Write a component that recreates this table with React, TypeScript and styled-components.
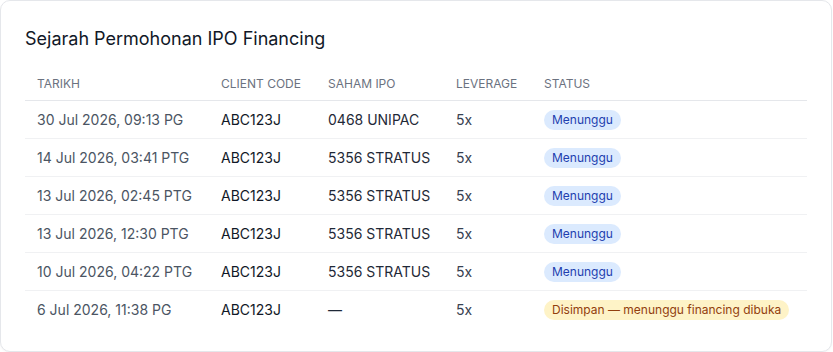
import { FC } from 'react';
import styled, { createGlobalStyle } from 'styled-components';

const Global = createGlobalStyle`
  body {
    margin: 0;
    background: #ffffff;
    font-family: Inter, "Noto Sans", sans-serif;
  }
`

const Card = styled.section`
  box-sizing: border-box;
  width: 832px;
  height: 352px;
  padding: 24px;
  background: #fff;
  border: 1px solid #e5e7eb;
  border-radius: 10px;
  box-shadow: 0 1px 2px rgba(0,0,0,0.04);
  .title{
    margin: 0 0 8px;
    font: 400 18px/28px Inter, sans-serif;
    color: #111827;
  }
`

const Table = styled.table`
  width: 100%;
  border-collapse: collapse;
  table-layout: fixed;
  th{
    text-align: left;
    font: 400 12px/16px Inter, sans-serif;
    color: #6b7280;
    text-transform: uppercase;
    padding: 15px 12px 8px;
    border-bottom: 1px solid #e5e7eb;
  }
  th:nth-child(1){ width: 160px; }
  th:nth-child(2){ width: 83px; }
  th:nth-child(3){ width: 104px; }
  th:nth-child(4){ width: 64px; }
  td{
    height: 38px;
    box-sizing: border-box;
    padding: 0 12px;
    font: 400 14px/20px Inter, sans-serif;
    color: #1f2937;
    border-bottom: 1px solid #f0f1f3;
    white-space: nowrap;
  }
  tr:last-child td{
    border-bottom: none;
  }
  td.date{ color: #4b5563; }
  td.code{ color: #111827; }
  td.lev{ color: #374151; }
`

const Badge = styled.span<{ $tone: 'blue' | 'amber' }>`
  display: inline-block;
  padding: 2px 8px;
  border-radius: 999px;
  font: 400 12px/16px Inter, sans-serif;
  background: ${p => p.$tone === 'blue' ? '#dbeafe' : '#fef3c7'};
  color: ${p => p.$tone === 'blue' ? '#1e40af' : '#92400e'};
`

type Row = { date: string, code: string, saham: string, lev: string, status: string, tone: 'blue' | 'amber' }

const rows: Row[] = [
  { date: '30 Jul 2026, 09:13 PG', code: 'ABC123J', saham: '0468 UNIPAC', lev: '5x', status: 'Menunggu', tone: 'blue' },
  { date: '14 Jul 2026, 03:41 PTG', code: 'ABC123J', saham: '5356 STRATUS', lev: '5x', status: 'Menunggu', tone: 'blue' },
  { date: '13 Jul 2026, 02:45 PTG', code: 'ABC123J', saham: '5356 STRATUS', lev: '5x', status: 'Menunggu', tone: 'blue' },
  { date: '13 Jul 2026, 12:30 PTG', code: 'ABC123J', saham: '5356 STRATUS', lev: '5x', status: 'Menunggu', tone: 'blue' },
  { date: '10 Jul 2026, 04:22 PTG', code: 'ABC123J', saham: '5356 STRATUS', lev: '5x', status: 'Menunggu', tone: 'blue' },
  { date: '6 Jul 2026, 11:38 PG', code: 'ABC123J', saham: '—', lev: '5x', status: 'Disimpan — menunggu financing dibuka', tone: 'amber' },
]

const History: FC = () => (
  <Card>
    <h2 className="title">Sejarah Permohonan IPO Financing</h2>
    <Table>
      <thead>
        <tr>
          <th>Tarikh</th>
          <th>Client Code</th>
          <th>Saham IPO</th>
          <th>Leverage</th>
          <th>Status</th>
        </tr>
      </thead>
      <tbody>
        {rows.map((r, i) => (
          <tr key={i}>
            <td className="date">{r.date}</td>
            <td className="code">{r.code}</td>
            <td>{r.saham}</td>
            <td className="lev">{r.lev}</td>
            <td><Badge $tone={r.tone}>{r.status}</Badge></td>
          </tr>
        ))}
      </tbody>
    </Table>
  </Card>
)

export default function App() {
  return (
    <>
      <Global />
      <History />
    </>
  )
}
